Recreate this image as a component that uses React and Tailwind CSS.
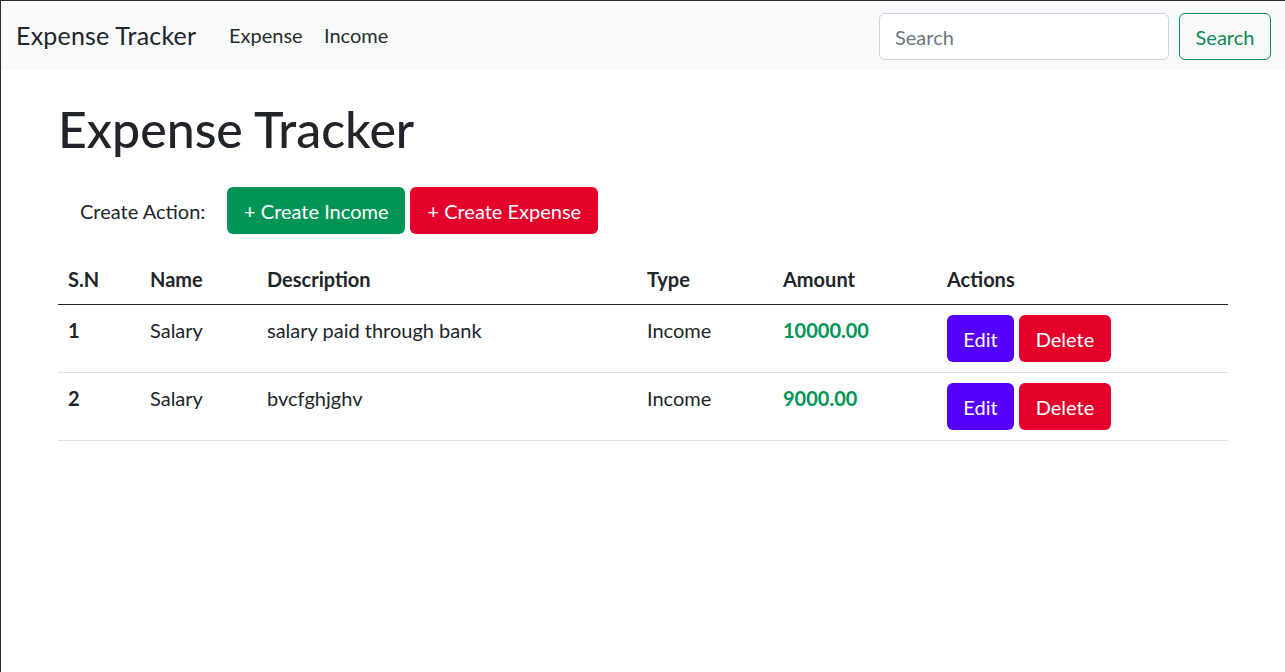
export default function App() {
  const rows = [
    { id: 1, name: "Salary", desc: "salary paid through bank", type: "Income", amount: "10000.00" },
    { id: 2, name: "Salary", desc: "bvcfghjghv", type: "Income", amount: "9000.00" },
  ];

  return (
    <div className="min-h-[672px] bg-white border-l border-t border-[#2b2b2b] text-[#212529] text-[20px] leading-[30px] font-['Lato','Liberation_Sans',sans-serif]">
      <nav className="h-[69px] bg-[#f8f9fa] flex items-center pl-[15px] pr-[14px]">
        <div className="flex items-center mb-[2px]">
          <span className="w-[213px] text-[25px] leading-[36px] tracking-[0.2px]">Expense Tracker</span>
          <a className="w-[95px] text-[#2a2d30]">Expense</a>
          <a className="text-[#2a2d30]">Income</a>
        </div>
        <div className="ml-auto flex items-center gap-[10px] mt-[2px]">
          <input
            placeholder="Search"
            className="w-[290px] h-[47px] bg-white border border-[#ced4da] rounded-[6px] px-[15px] text-[20px] placeholder:text-[#6c757d] outline-none"
          />
          <button className="h-[47px] w-[92px] border border-[#0d8a55] rounded-[6px] text-[#0d8a55]">Search</button>
        </div>
      </nav>

      <div className="px-[57px]">
        <h1 className="mt-[29px] text-[50px] leading-[60px] font-medium mb-[28px]">Expense Tracker</h1>

        <div className="flex items-center pl-[22px] h-[47px]">
          <span className="mr-[22px]">Create Action:</span>
          <button className="h-[47px] w-[178px] bg-[#009456] text-white rounded-[6px] mr-[5px]">+ Create Income</button>
          <button className="h-[47px] w-[188px] bg-[#e4002b] text-white rounded-[6px]">+ Create Expense</button>
        </div>

        <table className="mt-[20px] w-[1170px] border-collapse">
          <thead>
            <tr className="border-b border-[#212529] font-bold">
              <th className="w-[82px] text-left font-bold px-[10px] py-[10px]">S.N</th>
              <th className="w-[117px] text-left font-bold px-[10px] py-[10px]">Name</th>
              <th className="w-[380px] text-left font-bold px-[10px] py-[10px]">Description</th>
              <th className="w-[136px] text-left font-bold px-[10px] py-[10px]">Type</th>
              <th className="w-[164px] text-left font-bold px-[10px] py-[10px]">Amount</th>
              <th className="text-left font-bold px-[10px] py-[10px]">Actions</th>
            </tr>
          </thead>
          <tbody>
            {rows.map((r) => (
              <tr key={r.id} className="border-b border-[#dee2e6] align-top">
                <td className="px-[10px] py-[10px] font-bold">{r.id}</td>
                <td className="px-[10px] py-[10px]">{r.name}</td>
                <td className="px-[10px] py-[10px]">{r.desc}</td>
                <td className="px-[10px] py-[10px]">{r.type}</td>
                <td className="px-[10px] py-[10px] font-bold text-[#009456]">{r.amount}</td>
                <td className="px-[10px] py-[10px]">
                  <div className="flex gap-[5px]">
                    <button className="h-[47px] w-[67px] bg-[#5500ff] text-white rounded-[6px]">Edit</button>
                    <button className="h-[47px] w-[92px] bg-[#e4002b] text-white rounded-[6px]">Delete</button>
                  </div>
                </td>
              </tr>
            ))}
          </tbody>
        </table>
      </div>
    </div>
  );
}
